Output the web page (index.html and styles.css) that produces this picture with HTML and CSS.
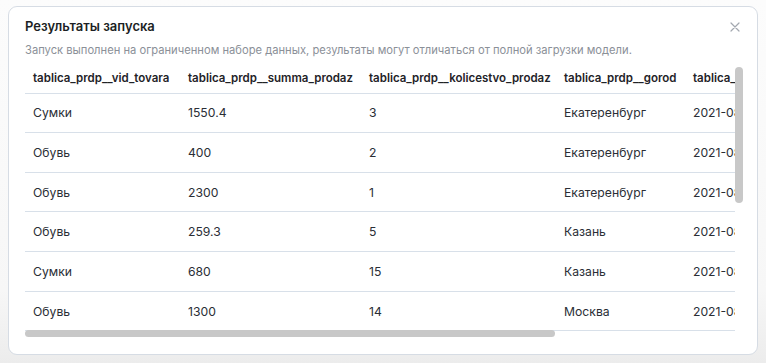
FILE: index.html
```html
<!DOCTYPE html>
<html lang="ru">
<head>
<meta charset="utf-8">
<title>Результаты запуска</title>
<link rel="stylesheet" href="styles.css">
</head>
<body>
<div class="modal">
  <div class="modal-head">
    <h2 class="title">Результаты запуска</h2>
    <button class="close" aria-label="Закрыть">
      <svg width="10" height="10" viewBox="0 0 10 10"><path d="M1 1L9 9M9 1L1 9" stroke="#a3a8b0" stroke-width="1.2" stroke-linecap="round"/></svg>
    </button>
  </div>
  <p class="note">Запуск выполнен на ограниченном наборе данных, результаты могут отличаться от полной загрузки модели.</p>
  <div class="scroller">
    <div class="viewport">
      <table class="grid">
        <colgroup>
          <col class="c1"><col class="c2"><col class="c3"><col class="c4"><col class="c5">
        </colgroup>
        <thead>
          <tr>
            <th>tablica_prdp__vid_tovara</th>
            <th>tablica_prdp__summa_prodaz</th>
            <th>tablica_prdp__kolicestvo_prodaz</th>
            <th>tablica_prdp__gorod</th>
            <th>tablica_prdp__data_prodazi</th>
          </tr>
        </thead>
        <tbody>
          <tr><td>Сумки</td><td>1550.4</td><td>3</td><td>Екатеренбург</td><td>2021-08-01</td></tr>
          <tr><td>Обувь</td><td>400</td><td>2</td><td>Екатеренбург</td><td>2021-08-02</td></tr>
          <tr><td>Обувь</td><td>2300</td><td>1</td><td>Екатеренбург</td><td>2021-08-03</td></tr>
          <tr><td>Обувь</td><td>259.3</td><td>5</td><td>Казань</td><td>2021-08-04</td></tr>
          <tr><td>Сумки</td><td>680</td><td>15</td><td>Казань</td><td>2021-08-05</td></tr>
          <tr><td>Обувь</td><td>1300</td><td>14</td><td>Москва</td><td>2021-08-06</td></tr>
          <tr><td>Сумки</td><td>940</td><td>4</td><td>Москва</td><td>2021-08-07</td></tr>
        </tbody>
      </table>
    </div>
    <div class="thumb-v"></div>
    <div class="thumb-h"></div>
  </div>
</div>
</body>
</html>
```

FILE: styles.css
```css
* { box-sizing: border-box; }
html, body { height: 100%; }
body {
  margin: 0;
  padding: 6px 8px 0 8px;
  font-family: Inter, "Noto Sans", "Liberation Sans", sans-serif;
  color: #23272e;
  background: linear-gradient(#fcfcfc 0%, #f7f7f7 80%, #ececec 100%);
}
.modal {
  width: 750px;
  height: 349px;
  background: #fff;
  border: 1px solid #d6dce4;
  border-radius: 9px;
  padding: 10px 14px 0 16px;
}
.modal-head {
  display: flex;
  justify-content: space-between;
  align-items: center;
  height: 18px;
}
.title {
  margin: 0;
  font-size: 13px;
  font-weight: 600;
  line-height: 18px;
  color: #1c1f24;
}
.close {
  border: 0;
  background: none;
  padding: 0;
  width: 16px;
  height: 16px;
  display: flex;
  align-items: center;
  justify-content: center;
  margin-top: 2px;
}
.note {
  margin: 7px 0 0 0;
  font-size: 11.2px;
  line-height: 16px;
  color: #8b9098;
}
.scroller {
  position: relative;
  margin-top: 5px;
  height: 275px;
  width: 718px;
  padding-right: 8px;
}
.viewport {
  overflow: hidden;
  height: 100%;
  width: 710px;
}
.grid {
  border-collapse: collapse;
  white-space: nowrap;
  table-layout: fixed;
  width: 860px;
}
.c1 { width: 155px; }
.c2 { width: 181px; }
.c3 { width: 195px; }
.c4 { width: 129px; }
.c5 { width: 200px; }
.grid th, .grid td {
  padding: 0 8px;
  text-align: left;
  border-bottom: 1px solid #d8e0e9;
}
.grid th {
  height: 30px;
  font-size: 11.5px;
  font-weight: 600;
  color: #1f2328;
}
.grid td {
  height: 39.67px;
  font-size: 12.2px;
  color: #2a2e35;
}
.thumb-v {
  position: absolute;
  top: 4px;
  right: 0;
  width: 8px;
  height: 136px;
  border-radius: 4px;
  background: #c8c8c8;
}
.thumb-h {
  position: absolute;
  left: 0;
  top: 267px;
  width: 530px;
  height: 7px;
  border-radius: 4px;
  background: #c8c8c8;
}
```
